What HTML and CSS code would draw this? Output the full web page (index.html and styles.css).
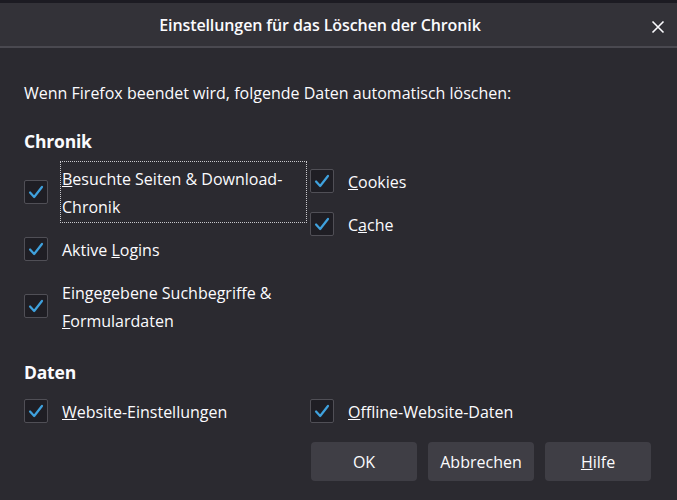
FILE: index.html
```
<!DOCTYPE html>
<html lang="de">
<head>
    <meta charset="UTF-8">
    <title>Einstellungen für das Löschen der Chronik</title>
    <link rel="stylesheet" href="styles.css">
</head>
<body>
    <div class="dialog">
        <div class="titlebar">
            <span class="title">Einstellungen für das Löschen der Chronik</span>
            <span class="close">
                <svg width="14" height="14" viewBox="0 0 14 14"><path d="M1.5 1.5 L12.5 12.5 M12.5 1.5 L1.5 12.5" stroke="#fbfbfe" stroke-width="1.6" fill="none"/></svg>
            </span>
        </div>

        <div class="content">
            <p class="intro">Wenn Firefox beendet wird, folgende Daten automatisch löschen:</p>

            <h2>Chronik</h2>
            <div class="options history">
                <div class="col">
                    <label class="item">
                        <span class="box"><svg viewBox="0 0 24 24"><path d="M5.5 12.5 L10 17.5 L18.5 6.5"/></svg></span>
                        <span class="text focused"><u>B</u>esuchte Seiten &amp; Download-Chronik</span>
                    </label>
                    <label class="item">
                        <span class="box"><svg viewBox="0 0 24 24"><path d="M5.5 12.5 L10 17.5 L18.5 6.5"/></svg></span>
                        <span class="text">Aktive <u>L</u>ogins</span>
                    </label>
                    <label class="item">
                        <span class="box"><svg viewBox="0 0 24 24"><path d="M5.5 12.5 L10 17.5 L18.5 6.5"/></svg></span>
                        <span class="text">Eingegebene Suchbegriffe &amp; <u>F</u>ormulardaten</span>
                    </label>
                </div>
                <div class="col col-right">
                    <label class="item">
                        <span class="box"><svg viewBox="0 0 24 24"><path d="M5.5 12.5 L10 17.5 L18.5 6.5"/></svg></span>
                        <span class="text"><u>C</u>ookies</span>
                    </label>
                    <label class="item">
                        <span class="box"><svg viewBox="0 0 24 24"><path d="M5.5 12.5 L10 17.5 L18.5 6.5"/></svg></span>
                        <span class="text">C<u>a</u>che</span>
                    </label>
                </div>
            </div>

            <h2 class="data-head">Daten</h2>
            <div class="options">
                <div class="col">
                    <label class="item">
                        <span class="box"><svg viewBox="0 0 24 24"><path d="M5.5 12.5 L10 17.5 L18.5 6.5"/></svg></span>
                        <span class="text"><u>W</u>ebsite-Einstellungen</span>
                    </label>
                </div>
                <div class="col">
                    <label class="item">
                        <span class="box"><svg viewBox="0 0 24 24"><path d="M5.5 12.5 L10 17.5 L18.5 6.5"/></svg></span>
                        <span class="text"><u>O</u>ffline-Website-Daten</span>
                    </label>
                </div>
            </div>

            <div class="buttons">
                <button class="btn">OK</button>
                <button class="btn">Abbrechen</button>
                <button class="btn"><u>H</u>ilfe</button>
            </div>
        </div>
    </div>
</body>
</html>
```

FILE: styles.css
```
html, body {
    margin: 0;
    padding: 0;
    background-color: #1c1b22;
}

body {
    font-family: "Open Sans", "Noto Sans", sans-serif;
    color: #fbfbfe;
    width: 677px;
    height: 500px;
    overflow: hidden;
}

.dialog {
    margin-top: 3px;
    background-color: #2b2a30;
    height: 497px;
}

.titlebar {
    height: 43px;
    padding-right: 37px;
    background-color: #333238;
    border-bottom: 2px solid #4a4950;
    display: flex;
    align-items: center;
    justify-content: center;
    position: relative;
}

.title {
    font-size: 16px;
    font-weight: 600;
    letter-spacing: -0.1px;
}

.close {
    position: absolute;
    right: 12px;
    top: 14px;
    width: 14px;
    height: 14px;
}

.content {
    padding: 32px 26px 0 24px;
}

.intro {
    margin: 0;
    font-size: 16px;
    line-height: 26px;
}

h2 {
    margin: 23px 0 8px 0;
    font-size: 17.5px;
    font-weight: 700;
    line-height: 24px;
    letter-spacing: -0.2px;
}

.options {
    display: flex;
}

.col {
    width: 286px;
    display: flex;
    flex-direction: column;
    gap: 9px;
}

.history .col-right {
    padding-top: 3px;
}

.item {
    display: flex;
    align-items: center;
    gap: 12px;
    font-size: 16px;
}

.box {
    flex: none;
    width: 22px;
    height: 22px;
    border: 1px solid #504f56;
    border-radius: 2px;
    background-color: #1f1e24;
}

.box svg {
    width: 22px;
    height: 22px;
    display: block;
}

.box path {
    fill: none;
    stroke: #3fa1dd;
    stroke-width: 2.4;
    stroke-linecap: round;
    stroke-linejoin: round;
}

.text {
    line-height: 28px;
    padding: 3px 1px 1px 1px;
    border: 1px solid transparent;
    width: 243px;
}

.text.focused {
    border: 1px dotted #c8c8cc;
}

.col-right .text {
    width: auto;
}

.data-head {
    margin-top: 23px;
    margin-bottom: 10px;
}

.buttons {
    display: flex;
    justify-content: flex-end;
    gap: 11px;
    margin-top: 14px;
}

.btn {
    width: 106px;
    height: 39px;
    border: none;
    border-radius: 4px;
    background-color: #3f3e45;
    color: #fbfbfe;
    font-family: "Open Sans", "Noto Sans", sans-serif;
    font-size: 16px;
}
```
